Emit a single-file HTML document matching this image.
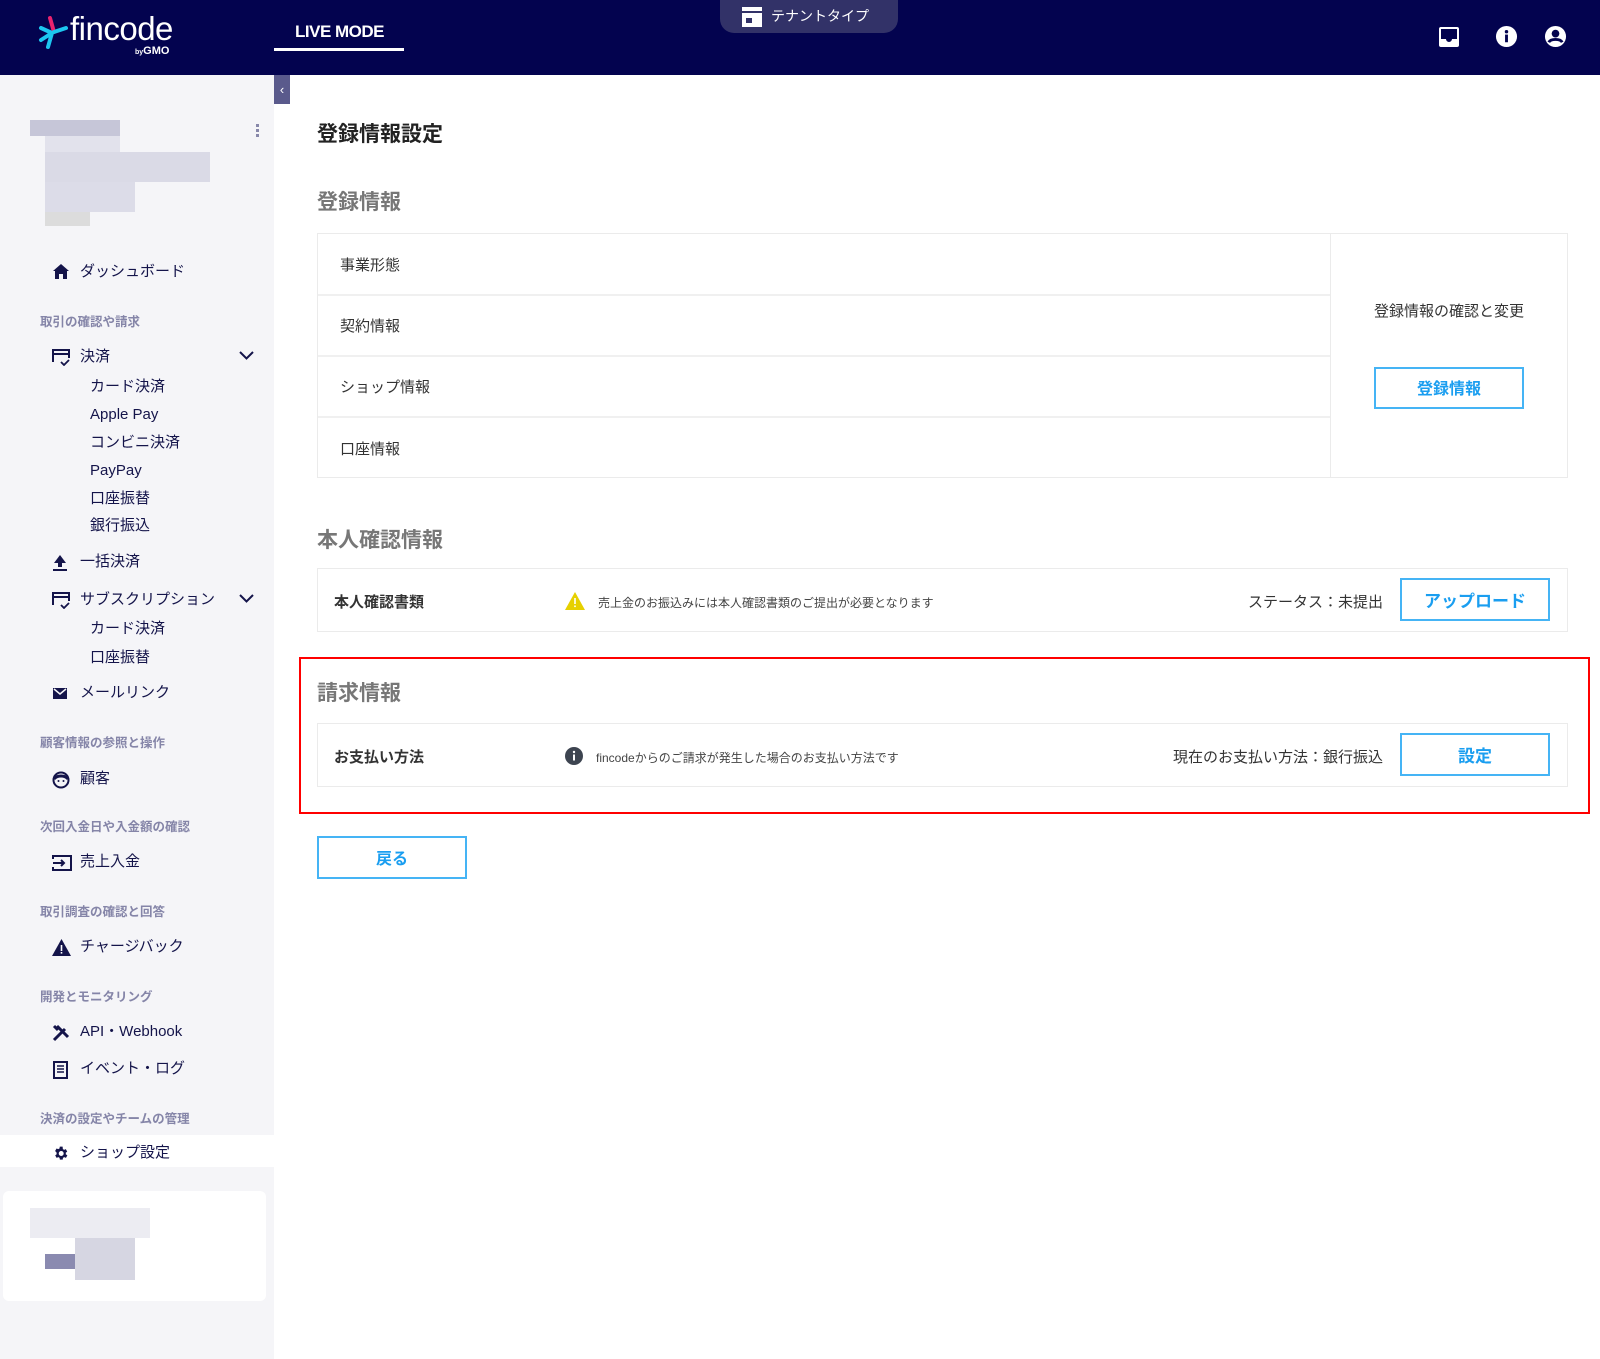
<!DOCTYPE html>
<html><head><meta charset="utf-8"><style>
*{margin:0;padding:0;box-sizing:border-box}
body{width:1600px;height:1359px;position:relative;background:#fff;font-family:"Liberation Sans","Noto Sans CJK JP",sans-serif;color:#333;overflow:hidden}
.a{position:absolute;white-space:nowrap}
.hdr{left:0;top:0;width:1600px;height:75px;background:#03034f}
.side{left:0;top:75px;width:274px;height:1284px;background:#f5f5f8}
.nav{font-size:15px;color:#14144a;line-height:20px}
.lbl{font-size:12.5px;color:#8585a8;font-weight:bold;line-height:16px}
.h2{font-size:21px;color:#777;font-weight:bold}
.box{border:1px solid #ebebeb;background:#fff}
.btn{border:2px solid #45b4f5;color:#1a9ef0;font-size:16px;font-weight:bold;text-align:center;background:#fff}
.cell{font-size:15px;color:#333;}
</style></head><body>
<div class="a hdr"></div>
<svg class="a" style="left:36px;top:16px" width="34" height="34" viewBox="0 0 34 34">
<path d="M14 2 L18 16" stroke="#e8236e" stroke-width="4" stroke-linecap="round"/>
<path d="M5 12 L16 17 M16 17 L5 24 M16 17 L12 31" stroke="#1cc6f0" stroke-width="4" stroke-linecap="round"/>
<path d="M18 16 L30 12" stroke="#1cc6f0" stroke-width="4" stroke-linecap="round"/>
</svg>
<div class="a" style="left:70px;top:10px;font-size:33px;color:#fff;letter-spacing:-0.5px">fincode</div>
<div class="a" style="left:135px;top:45px;font-size:11px;color:#fff;font-weight:bold"><span style="font-size:7px">by</span>GMO</div>
<div class="a" style="left:295px;top:22px;font-size:17px;color:#fff;font-weight:bold;letter-spacing:-0.5px">LIVE MODE</div>
<div class="a" style="left:274px;top:48px;width:130px;height:3px;background:#fff"></div>
<div class="a" style="left:720px;top:0;width:178px;height:33px;background:#323268;border-radius:0 0 14px 14px"></div>
<svg class="a" style="left:741px;top:7px" width="22" height="20" viewBox="0 0 22 20"><rect x="1" y="0" width="20" height="4" fill="#fff"/><rect x="1" y="6" width="20" height="14" fill="#fff"/><rect x="5" y="11" width="6" height="5" fill="#323268"/></svg>
<div class="a" style="left:771px;top:6px;font-size:14px;color:#fff">テナントタイプ</div>
<svg class="a" style="left:1438px;top:26px" width="22" height="22" viewBox="0 0 22 22"><rect x="1" y="1" width="20" height="20" rx="2" fill="#fff"/><path d="M3 3h16v10h-5a3 3 0 0 1-6 0H3z" fill="#03034f"/></svg>
<svg class="a" style="left:1495px;top:25px" width="23" height="23" viewBox="0 0 24 24"><circle cx="12" cy="12" r="11" fill="#fff"/><rect x="10.5" y="10" width="3" height="8" fill="#03034f"/><circle cx="12" cy="7" r="1.8" fill="#03034f"/></svg>
<svg class="a" style="left:1544px;top:25px" width="23" height="23" viewBox="0 0 24 24"><circle cx="12" cy="12" r="11" fill="#fff"/><circle cx="12" cy="9" r="4" fill="#03034f"/><path d="M5 18c2-4 12-4 14 0" stroke="#03034f" stroke-width="3" fill="none"/></svg>

<div class="a side"></div>
<div class="a" style="left:274px;top:75px;width:16px;height:29px;background:#5a5a8c;color:#fff;font-size:13px;text-align:center;line-height:29px">‹</div>
<div class="a" style="left:30px;top:120px;width:90px;height:16px;background:#c6c6d8"></div>
<div class="a" style="left:45px;top:136px;width:75px;height:16px;background:#e2e2ec"></div>
<div class="a" style="left:45px;top:152px;width:165px;height:30px;background:#dadae6"></div>
<div class="a" style="left:45px;top:182px;width:90px;height:30px;background:#dcdce8"></div>
<div class="a" style="left:45px;top:212px;width:45px;height:14px;background:#dcdcdc"></div>
<div class="a" style="left:256px;top:124px;width:3px;height:14px;background:repeating-linear-gradient(#8888aa 0 3px,transparent 3px 5px)"></div>

<svg class="a" style="left:53px;top:264px" width="16" height="15" viewBox="0 0 16 15"><path d="M8 0L0 7h2v8h4v-5h4v5h4V7h2z" fill="#14144a"/></svg>
<div class="a nav" style="left:80px;top:262px">ダッシュボード</div>
<div class="a lbl" style="left:40px;top:314px">取引の確認や請求</div>
<svg class="a" style="left:52px;top:348px" width="18" height="18" viewBox="0 0 18 18"><path d="M1 14V2h16v8M1 6h16" stroke="#14144a" stroke-width="2" fill="none"/><path d="M9 14l3 3 5-5" stroke="#14144a" stroke-width="1.8" fill="none"/></svg>
<div class="a nav" style="left:80px;top:347px">決済</div>
<svg class="a" style="left:239px;top:351px" width="15" height="10" viewBox="0 0 15 10"><path d="M1 1l6.5 6.5L14 1" stroke="#14144a" stroke-width="2" fill="none"/></svg>
<div class="a nav" style="left:90px;top:377px">カード決済</div>
<div class="a nav" style="left:90px;top:405px">Apple Pay</div>
<div class="a nav" style="left:90px;top:433px">コンビニ決済</div>
<div class="a nav" style="left:90px;top:461px">PayPay</div>
<div class="a nav" style="left:90px;top:489px">口座振替</div>
<div class="a nav" style="left:90px;top:516px">銀行振込</div>
<svg class="a" style="left:52px;top:554px" width="16" height="17" viewBox="0 0 16 17"><path d="M8 1L2 9h4v4h4V9h4z M1 15h14v2H1z" fill="#14144a"/></svg>
<div class="a nav" style="left:80px;top:552px">一括決済</div>
<svg class="a" style="left:52px;top:591px" width="18" height="18" viewBox="0 0 18 18"><path d="M1 14V2h16v8M1 6h16" stroke="#14144a" stroke-width="2" fill="none"/><path d="M9 14l3 3 5-5" stroke="#14144a" stroke-width="1.8" fill="none"/></svg>
<div class="a nav" style="left:80px;top:590px">サブスクリプション</div>
<svg class="a" style="left:239px;top:594px" width="15" height="10" viewBox="0 0 15 10"><path d="M1 1l6.5 6.5L14 1" stroke="#14144a" stroke-width="2" fill="none"/></svg>
<div class="a nav" style="left:90px;top:619px">カード決済</div>
<div class="a nav" style="left:90px;top:648px">口座振替</div>
<svg class="a" style="left:53px;top:687px" width="16" height="14" viewBox="0 0 16 14"><rect x="0" y="1" width="14" height="11" fill="#14144a"/><path d="M1 2l6 5 6-5" stroke="#f5f5f8" stroke-width="1.5" fill="none"/></svg>
<div class="a nav" style="left:80px;top:683px">メールリンク</div>
<div class="a lbl" style="left:40px;top:735px">顧客情報の参照と操作</div>
<svg class="a" style="left:52px;top:771px" width="18" height="18" viewBox="0 0 18 18"><circle cx="9" cy="9" r="7.5" stroke="#14144a" stroke-width="2" fill="none"/><path d="M2 8c3-4 11-4 14 0" stroke="#14144a" stroke-width="3" fill="none"/><circle cx="6.5" cy="10" r="1" fill="#14144a"/><circle cx="11.5" cy="10" r="1" fill="#14144a"/></svg>
<div class="a nav" style="left:80px;top:769px">顧客</div>
<div class="a lbl" style="left:40px;top:819px">次回入金日や入金額の確認</div>
<svg class="a" style="left:52px;top:855px" width="20" height="16" viewBox="0 0 20 16"><path d="M1 4V1h18v14H1v-3" stroke="#14144a" stroke-width="2" fill="none"/><path d="M1 8h11M9 5l3 3-3 3" stroke="#14144a" stroke-width="2" fill="none"/></svg>
<div class="a nav" style="left:80px;top:852px">売上入金</div>
<div class="a lbl" style="left:40px;top:904px">取引調査の確認と回答</div>
<svg class="a" style="left:52px;top:939px" width="19" height="17" viewBox="0 0 19 17"><path d="M9.5 0L19 17H0z" fill="#14144a"/><rect x="8.7" y="6" width="1.6" height="6" fill="#fff"/><rect x="8.7" y="13" width="1.6" height="1.6" fill="#fff"/></svg>
<div class="a nav" style="left:80px;top:937px">チャージバック</div>
<div class="a lbl" style="left:40px;top:989px">開発とモニタリング</div>
<svg class="a" style="left:52px;top:1024px" width="18" height="18" viewBox="0 0 18 18"><path d="M2 16L13 5M5 2l11 11M2 2l4 4" stroke="#14144a" stroke-width="3" fill="none"/></svg>
<div class="a nav" style="left:80px;top:1022px">API・Webhook</div>
<svg class="a" style="left:53px;top:1061px" width="15" height="18" viewBox="0 0 15 18"><rect x="1" y="1" width="13" height="16" stroke="#14144a" stroke-width="2" fill="none"/><path d="M4 5h7M4 8h7M4 11h7" stroke="#14144a" stroke-width="1.5"/></svg>
<div class="a nav" style="left:80px;top:1059px">イベント・ログ</div>
<div class="a lbl" style="left:40px;top:1111px">決済の設定やチームの管理</div>
<div class="a" style="left:0;top:1135px;width:274px;height:32px;background:#fff"></div>
<svg class="a" style="left:52px;top:1145px" width="17" height="17" viewBox="0 0 24 24"><path fill="#14144a" d="M19.4 13c.04-.3.1-.6.1-1s-.03-.7-.1-1l2.1-1.6-2-3.5-2.5 1a7 7 0 0 0-1.7-1L15 2.3h-4l-.4 2.6a7 7 0 0 0-1.7 1l-2.5-1-2 3.5L6.6 11c-.1.3-.1.7-.1 1s0 .7.1 1l-2.1 1.6 2 3.5 2.5-1c.5.4 1.1.7 1.7 1l.4 2.6h4l.4-2.6c.6-.3 1.2-.6 1.7-1l2.5 1 2-3.5zM13 15.5a3.5 3.5 0 1 1 0-7 3.5 3.5 0 0 1 0 7z"/></svg>
<div class="a nav" style="left:80px;top:1143px">ショップ設定</div>
<div class="a" style="left:3px;top:1191px;width:263px;height:110px;background:#fff;border-radius:6px"></div>
<div class="a" style="left:30px;top:1208px;width:120px;height:30px;background:#ececf2"></div>
<div class="a" style="left:75px;top:1238px;width:60px;height:42px;background:#d6d6e2"></div>
<div class="a" style="left:45px;top:1254px;width:30px;height:15px;background:#8a8ab0"></div>

<div class="a" style="left:317px;top:118px;font-size:21px;font-weight:bold;color:#222">登録情報設定</div>
<div class="a h2" style="left:317px;top:186px">登録情報</div>
<div class="a box" style="left:317px;top:233px;width:1251px;height:245px"></div>
<div class="a" style="left:1330px;top:233px;width:1px;height:245px;background:#ebebeb"></div>
<div class="a" style="left:318px;top:294px;width:1012px;height:2px;background:#f0f0f0"></div>
<div class="a" style="left:318px;top:355px;width:1012px;height:2px;background:#f0f0f0"></div>
<div class="a" style="left:318px;top:416px;width:1012px;height:2px;background:#f0f0f0"></div>
<div class="a cell" style="left:340px;top:254px">事業形態</div>
<div class="a cell" style="left:340px;top:315px">契約情報</div>
<div class="a cell" style="left:340px;top:376px">ショップ情報</div>
<div class="a cell" style="left:340px;top:438px">口座情報</div>
<div class="a cell" style="left:1374px;top:300px;width:150px;text-align:center">登録情報の確認と変更</div>
<div class="a btn" style="left:1374px;top:367px;width:150px;height:42px;line-height:42px">登録情報</div>

<div class="a h2" style="left:317px;top:524px">本人確認情報</div>
<div class="a box" style="left:317px;top:568px;width:1251px;height:64px"></div>
<div class="a cell" style="left:334px;top:591px;font-weight:bold;color:#333">本人確認書類</div>
<svg class="a" style="left:565px;top:592px" width="20" height="18" viewBox="0 0 20 18"><path d="M10 0L20 18H0z" fill="#e6d000"/><rect x="9.2" y="6" width="1.6" height="6" fill="#fff"/><rect x="9.2" y="13.5" width="1.6" height="1.6" fill="#fff"/></svg>
<div class="a" style="left:598px;top:594px;font-size:12px;color:#444">売上金のお振込みには本人確認書類のご提出が必要となります</div>
<div class="a cell" style="left:1248px;top:591px">ステータス：未提出</div>
<div class="a btn" style="left:1400px;top:578px;width:150px;height:43px;line-height:44px;font-size:17px">アップロード</div>

<div class="a" style="left:299px;top:657px;width:1291px;height:157px;border:2px solid #f00"></div>
<div class="a h2" style="left:317px;top:677px">請求情報</div>
<div class="a box" style="left:317px;top:723px;width:1251px;height:64px"></div>
<div class="a cell" style="left:334px;top:746px;font-weight:bold">お支払い方法</div>
<svg class="a" style="left:565px;top:747px" width="18" height="18" viewBox="0 0 18 18"><circle cx="9" cy="9" r="9" fill="#3d4450"/><rect x="8" y="7.5" width="2" height="6" fill="#fff"/><circle cx="9" cy="5" r="1.2" fill="#fff"/></svg>
<div class="a" style="left:596px;top:749px;font-size:12px;color:#444">fincodeからのご請求が発生した場合のお支払い方法です</div>
<div class="a cell" style="left:1173px;top:746px">現在のお支払い方法：銀行振込</div>
<div class="a btn" style="left:1400px;top:733px;width:150px;height:43px;line-height:44px;font-size:17px">設定</div>

<div class="a btn" style="left:317px;top:836px;width:150px;height:43px;line-height:44px">戻る</div>
</body></html>
